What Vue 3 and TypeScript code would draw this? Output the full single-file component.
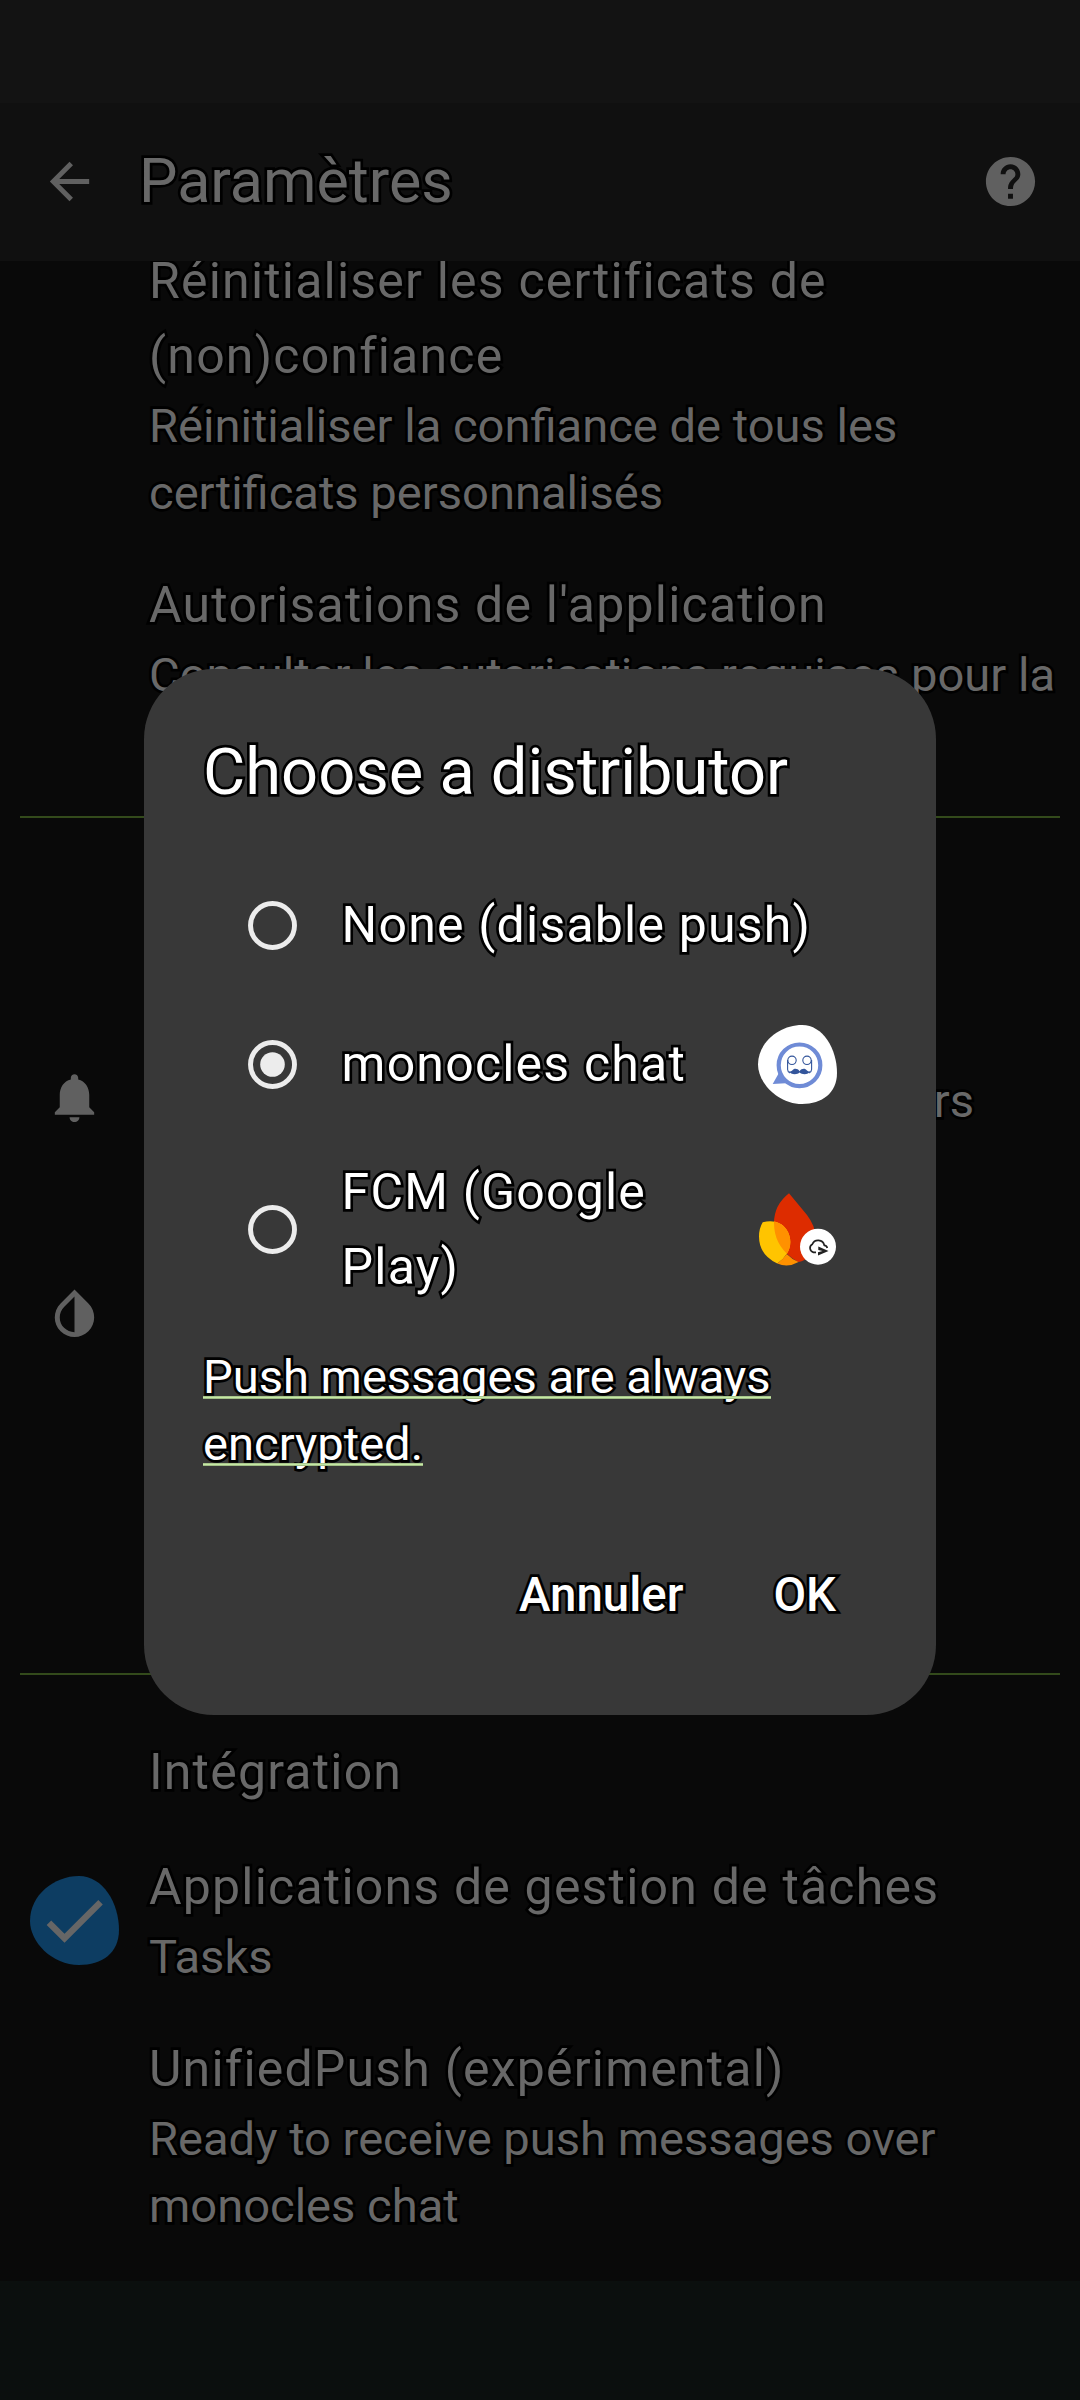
<script setup lang="ts">
import { ref } from 'vue'

interface Distributor {
  id: string
  label: string
  icon?: 'monocles' | 'fcm'
}

const distributors: Distributor[] = [
  { id: 'none', label: 'None (disable push)' },
  { id: 'monocles', label: 'monocles chat', icon: 'monocles' },
  { id: 'fcm', label: 'FCM (Google Play)', icon: 'fcm' },
]
const selected = ref<string>('monocles')
</script>

<template>
  <div class="screen">
    <div class="status-bar"></div>
    <header class="app-bar">
      <svg class="icon" viewBox="0 0 24 24"><path d="M20 11H7.83l5.59-5.59L12 4l-8 8 8 8 1.41-1.41L7.83 13H20v-2z" /></svg>
      <h1>Paramètres</h1>
      <svg class="icon" viewBox="0 0 24 24"><path d="M12 2C6.48 2 2 6.48 2 12s4.48 10 10 10 10-4.48 10-10S17.52 2 12 2zm1 17h-2v-2h2v2zm2.07-7.75l-.9.92C13.45 12.9 13 13.5 13 15h-2v-.5c0-1.1.45-2.1 1.17-2.83l1.24-1.26c.37-.36.59-.86.59-1.41 0-1.1-.9-2-2-2s-2 .9-2 2H8c0-2.21 1.79-4 4-4s4 1.79 4 4c0 .88-.36 1.68-.93 2.25z" /></svg>
    </header>

    <main class="list">
      <section class="security">
        <div class="row">
          <div class="lead"></div>
          <div class="text">
            <div class="title">Réinitialiser les certificats de<br />(non)confiance</div>
            <div class="summary">Réinitialiser la confiance de tous les<br />certificats personnalisés</div>
          </div>
        </div>
        <div class="row">
          <div class="lead"></div>
          <div class="text">
            <div class="title">Autorisations de l'application</div>
            <div class="summary">Consulter les autorisations requises pour la</div>
          </div>
        </div>
      </section>
      <section class="interface">
        <div class="row tall">
          <div class="lead">
            <svg class="icon" viewBox="0 0 24 24"><path d="M12 22c1.1 0 2-.9 2-2h-4c0 1.1.89 2 2 2zm6-6v-5c0-3.07-1.64-5.64-4.5-6.32V4c0-.83-.67-1.5-1.5-1.5s-1.5.67-1.5 1.5v.68C7.63 5.36 6 7.92 6 11v5l-2 2v1h16v-1l-2-2z" /></svg>
          </div>
          <div class="summary trailing">rs</div>
        </div>
        <div class="row tall">
          <div class="lead">
            <svg class="icon" viewBox="0 0 24 24"><path d="M17.66 7.93L12 2.27 6.34 7.93c-3.12 3.12-3.12 8.19 0 11.31C7.9 20.8 9.95 21.58 12 21.58c2.05 0 4.1-.78 5.66-2.34 3.12-3.12 3.12-8.19 0-11.31zM12 19.59c-1.6 0-3.11-.62-4.24-1.76C6.62 16.69 6 15.19 6 13.59s.62-3.11 1.76-4.24L12 5.1v14.49z" /></svg>
          </div>
        </div>
      </section>
      <section class="integration">
        <div class="title heading">Intégration</div>
        <div class="row">
          <div class="lead">
            <svg class="tasks" viewBox="0 0 89 89">
              <path fill="#0d3d62" d="M49 0C73 0 89 27 89 54C89 77 72 89 49 89C22 89 0 66 0 45C0 19 24 0 49 0Z" />
              <path fill="#666" transform="translate(5.8 6.2) scale(3.19)" d="M9 16.17L4.83 12l-1.42 1.41L9 19 21 7l-1.41-1.41z" />
            </svg>
          </div>
          <div class="text">
            <div class="title">Applications de gestion de tâches</div>
            <div class="summary">Tasks</div>
          </div>
        </div>
        <div class="row">
          <div class="lead"></div>
          <div class="text">
            <div class="title">UnifiedPush (expérimental)</div>
            <div class="summary">Ready to receive push messages over<br />monocles chat</div>
          </div>
        </div>
      </section>
    </main>
    <div class="nav-bar"></div>

    <div class="dialog" role="dialog">
      <h2>Choose a distributor</h2>
      <div class="options">
        <div v-for="d in distributors" :key="d.id" class="option" @click="selected = d.id">
          <svg class="radio" viewBox="0 0 49 49">
            <circle cx="24.5" cy="24.5" r="22" fill="none" stroke="#ececec" stroke-width="4.9" />
            <circle v-if="selected === d.id" cx="24.5" cy="24.5" r="12.3" fill="#ececec" />
          </svg>
          <div class="title">{{ d.label }}</div>
          <svg v-if="d.icon === 'monocles'" class="app" viewBox="0 0 79 79">
            <path fill="#fff" d="M44 0C65 0 79 24 79 48C79 68 64 79 44 79C20 79 0 58 0 39.5C0 17 22 0 44 0Z" />
            <path fill="#6f8bd6" d="M14.7 59L22 46L32 58Z" />
            <circle cx="41.5" cy="40.3" r="20.8" fill="#fff" stroke="#6f8bd6" stroke-width="4.2" />
            <g fill="none" stroke="#33559b" stroke-width="1.1">
              <circle cx="34" cy="35.3" r="4.2" />
              <circle cx="49" cy="35.3" r="4.2" />
              <path d="M29.6 35V44.5Q29.7 47 32 48M53.6 35V44.5Q53.5 47 51 48" />
            </g>
            <path fill="#33559b" d="M41.6 46.2C39.5 42.8 35.5 43.3 34.5 45.3C33.5 46.6 32 46.6 31 46C32.5 49.8 39 50 41.6 47.5C44.2 50 50.7 49.8 52.2 46C51.2 46.6 49.7 46.6 48.7 45.3C47.7 43.3 43.7 42.8 41.6 46.2Z" />
          </svg>
          <svg v-else-if="d.icon === 'fcm'" class="app" viewBox="0 0 79 79">
            <defs>
              <clipPath id="lobe"><path d="M4.7 32.3C15 29.5 24 32.5 28.5 39.5C34 48 33 57 29 63.5Q25.5 69.5 19.3 73.6Q1 65 1 46.5Q1 38.5 4.7 32.3Z" /></clipPath>
            </defs>
            <path fill="#dd2c00" d="M31 3.3L49 25Q57.3 36 57.3 46C58 60 50 71 40 72Q16 58 16 33Q16 15 31 3.3Z" />
            <path fill="#ffc400" d="M4.7 32.3C15 29.5 24 32.5 28.5 39.5C34 48 33 57 29 63.5Q25.5 69.5 19.3 73.6Q1 65 1 46.5Q1 38.5 4.7 32.3Z" />
            <path clip-path="url(#lobe)" fill="#ff9100" d="M31 3.3L49 25Q57.3 36 57.3 46C58 60 50 71 40 72Q16 58 16 33Q16 15 31 3.3Z" />
            <path fill="#ff9100" d="M28.7 64Q33.5 69 40.5 72Q30 78 19.3 73.6Q25 69.5 28.7 64Z" />
            <circle cx="60" cy="56.7" r="18" fill="#fff" />
            <path fill="none" stroke="#222" stroke-width="1.7" d="M58 62.3H55.5A4.3 4.3 0 0 1 54.3 54.3A6.3 6.3 0 0 1 66.3 55.3Q68.8 55.6 69.3 58" />
            <path fill="#222" d="M60.3 56.5L70.5 61L60 65.5V62.2L64.5 61L60.3 60Z" />
          </svg>
        </div>
      </div>
      <p class="note">
        <span>Push messages are always</span>
        <span>encrypted.</span>
      </p>
      <div class="actions">
        <span>Annuler</span>
        <span>OK</span>
      </div>
    </div>
  </div>
</template>

<style>
body {
  margin: 0;
  background: #090909;
}
</style>

<style scoped>
.screen {
  position: relative;
  display: flex;
  flex-direction: column;
  width: 1080px;
  height: 2400px;
  overflow: hidden;
  background: #090909;
  color: #686868;
  font-family: Roboto, 'Liberation Sans', sans-serif;
  -webkit-text-stroke: 5.4px #000;
  paint-order: stroke fill;
  stroke-linejoin: round;
}
.screen svg {
  display: block;
  flex: none;
  paint-order: normal;
  stroke-linejoin: miter;
}
h1,
h2,
p {
  margin: 0;
  font-weight: 400;
}
.status-bar {
  flex: none;
  height: 103px;
  background: #131313;
}
.app-bar {
  flex: none;
  display: flex;
  align-items: center;
  box-sizing: border-box;
  height: 158px;
  padding: 0 40px 1px;
  background: #101010;
}
.app-bar h1 {
  flex: 1;
  margin: -2px 0 0 40px;
  font-size: 61px;
  line-height: 70px;
}
.icon {
  width: 59px;
  height: 59px;
  fill: #606060;
}
.list {
  flex: 1;
  display: flex;
  flex-direction: column;
  overflow: hidden;
}
.row {
  display: flex;
  align-items: center;
  padding: 20.6px 0;
}
.lead {
  flex: none;
  display: flex;
  justify-content: center;
  width: 149px;
}
.text {
  white-space: nowrap;
}
.text .summary {
  margin-top: -1.2px;
}
.title {
  font-size: 50px;
  line-height: 75px;
  letter-spacing: 1.2px;
}
.summary {
  font-size: 47.1px;
  line-height: 67px;
}
.security {
  box-sizing: border-box;
  flex: none;
  height: 555px;
  overflow: hidden;
}
.security .row:first-child {
  margin-top: -38px;
}
.interface {
  box-sizing: border-box;
  flex: none;
  height: 859px;
  margin: 0 20px;
  padding-top: 172px;
  border-top: 2px solid #334a1b;
  border-bottom: 2px solid #334a1b;
}
.interface .lead {
  width: 108.5px;
}
.tall {
  box-sizing: border-box;
  height: 215.5px;
}
.trailing {
  margin-left: auto;
  padding: 6px 86px 0 0;
}
.integration {
  padding-top: 59.8px;
}
.heading {
  padding: 0 0 19.2px 149px;
}
.tasks {
  width: 89px;
  height: 89px;
  margin-top: 2px;
}
.nav-bar {
  flex: none;
  height: 119px;
  background: #0b0f0e;
}
.dialog {
  position: absolute;
  top: 669px;
  left: 144px;
  box-sizing: border-box;
  width: 792px;
  height: 1046px;
  padding: 63.4px 99px 0 59px;
  border-radius: 70px;
  background: #383838;
  color: #fff;
}
h2 {
  font-size: 65px;
  line-height: 80px;
  white-space: nowrap;
}
.options {
  margin-top: 43.6px;
}
.option {
  display: flex;
  align-items: center;
  height: 139px;
  padding-left: 45px;
}
.option:last-child {
  height: 191px;
}
.radio {
  width: 49px;
  height: 49px;
}
.option .title {
  flex: 1;
  margin: 0.6px 0 0 44.6px;
}
.app {
  width: 79px;
  height: 79px;
}
.note {
  display: flex;
  flex-direction: column;
  align-items: flex-start;
  margin: 18px 0 0;
  font-size: 47.1px;
  line-height: 67px;
}
.note span {
  position: relative;
  white-space: nowrap;
}
.note span::after {
  content: '';
  position: absolute;
  left: 0;
  right: 0;
  top: 53px;
  height: 3px;
  background: linear-gradient(#a9c78c 0 1px, #c5e8a5 1px 2px, #a0bd85 2px);
}
.actions {
  display: flex;
  justify-content: flex-end;
  gap: 90px;
  margin-top: 85.4px;
  padding-right: 1px;
  font-size: 47.4px;
  line-height: 67px;
  font-weight: 500;
}
</style>
